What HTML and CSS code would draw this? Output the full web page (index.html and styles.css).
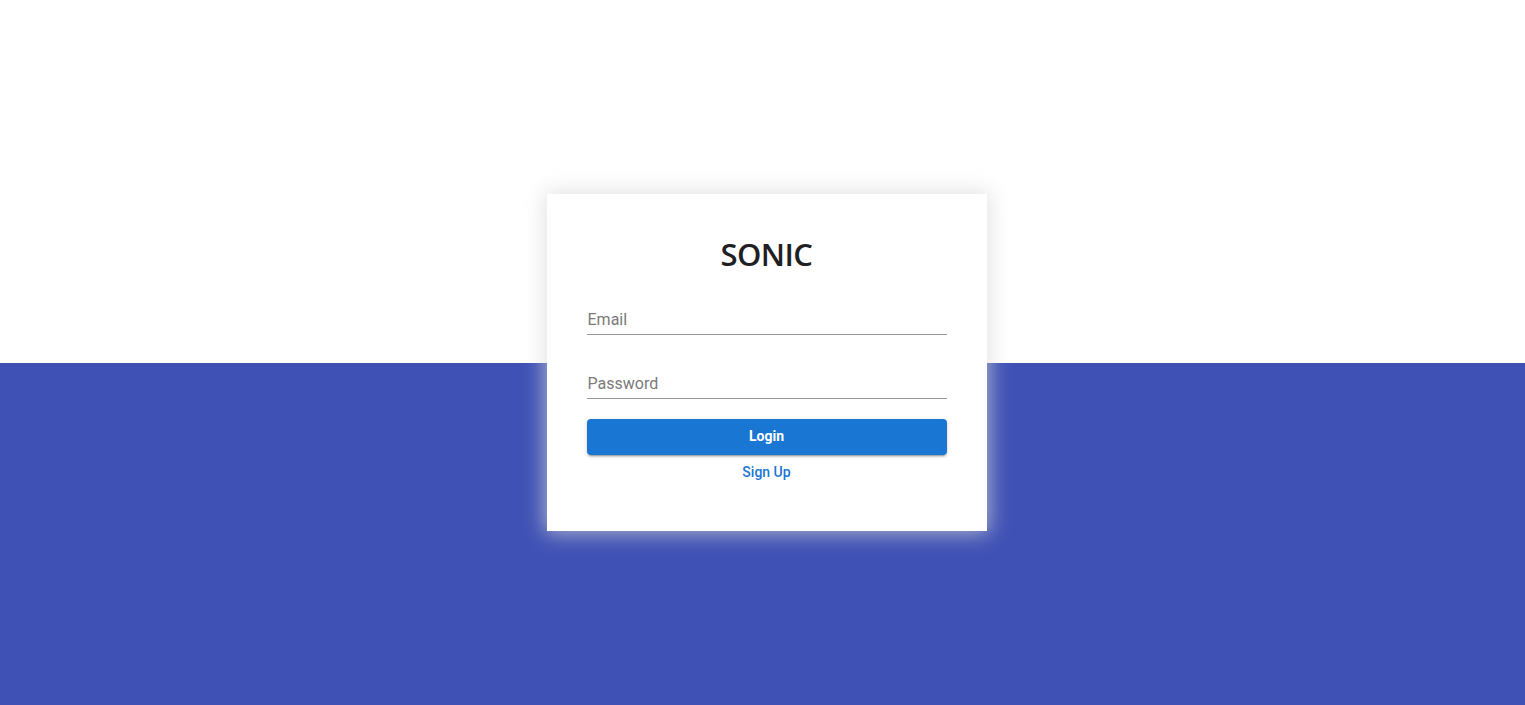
FILE: index.html
```html
<!DOCTYPE html>
<html lang="en">
<head>
<meta charset="utf-8">
<title>Sonic - Login</title>
<link rel="stylesheet" href="styles.css">
</head>
<body>
<div class="page">
  <div class="top-half"></div>
  <div class="bottom-half"></div>
  <div class="center">
    <form class="card">
      <h1 class="title">SONIC</h1>
      <div class="field">
        <div class="input-wrap">
          <input class="input" type="email" placeholder="Email">
        </div>
      </div>
      <div class="field">
        <div class="input-wrap">
          <input class="input" type="password" placeholder="Password">
        </div>
      </div>
      <button class="btn" type="button">Login</button>
      <a class="link" href="#">Sign Up</a>
    </form>
  </div>
</div>
</body>
</html>
```

FILE: styles.css
```css
* { box-sizing: border-box; }
html, body { margin: 0; padding: 0; height: 100%; }
body { font-family: Roboto, "Liberation Sans", sans-serif; background: #fff; }

.page {
  position: relative;
  height: 705px;
  display: flex;
  flex-direction: column;
}
.top-half { height: 363px; background: #fff; }
.bottom-half { flex: 1; background: #3f51b5; }

.center {
  position: absolute;
  inset: 0;
  display: flex;
  justify-content: center;
  padding-top: 194px;
  padding-left: 8px;
}

.card {
  width: 440px;
  height: 337px;
  background: #fff;
  padding: 40px 40px 40px;
  display: flex;
  flex-direction: column;
  box-shadow: 0 0 20px 2px rgba(215, 215, 215, 0.75);
}

.title {
  margin: 0;
  height: 37px;
  font-family: "Open Sans", "Noto Sans", sans-serif;
  font-weight: 600;
  font-size: 31px;
  line-height: 41px;
  text-align: center;
  color: #1f1f24;
  letter-spacing: -0.6px;
}

.field { padding-top: 32px; }
.input-wrap {
  height: 32px;
  border-bottom: 1px solid #949494;
}
.input {
  display: block;
  width: 100%;
  border: 0;
  outline: none;
  padding: 7px 0 5px 1px;
  height: 31px;
  font-family: Roboto, sans-serif;
  font-size: 16px;
  line-height: 19px;
  color: #212121;
  background: transparent;
}
.input::placeholder { color: #7a7a7a; opacity: 1; }

.btn {
  margin-top: 20px;
  height: 36px;
  border: 0;
  border-radius: 4px;
  background: #1976d2;
  color: #fff;
  font-family: Roboto, sans-serif;
  font-weight: 700;
  font-size: 14px;
  padding: 0 0 2px;
  box-shadow: 0 3px 1px -2px rgba(0,0,0,0.2), 0 2px 2px 0 rgba(0,0,0,0.14), 0 1px 5px 0 rgba(0,0,0,0.12);
  cursor: pointer;
}

.link {
  margin-top: 7px;
  align-self: center;
  font-family: Roboto, sans-serif;
  font-weight: 500;
  font-size: 14px;
  line-height: 20px;
  color: #1976d2;
  text-decoration: none;
}
```
